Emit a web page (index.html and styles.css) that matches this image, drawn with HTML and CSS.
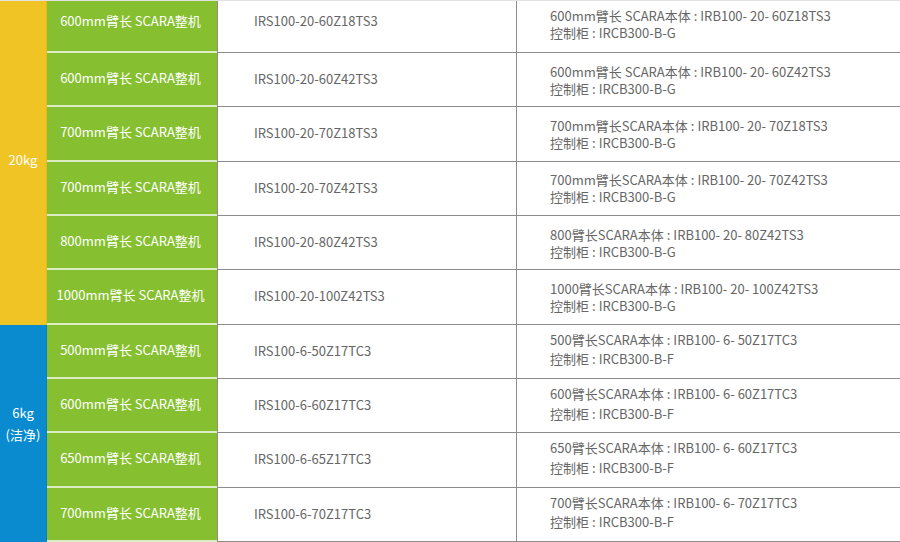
FILE: index.html
```html
<!DOCTYPE html>
<html lang="zh">
<head>
<meta charset="utf-8">
<title>SCARA</title>
<link rel="stylesheet" href="styles.css">
</head>
<body>
<div class="spec">
  <div class="load load-20">20kg</div>
  <div class="load load-6">6kg<br>(洁净)</div>

  <div class="name first">600mm臂长 SCARA整机</div>
  <div class="code first">IRS100-20-60Z18TS3</div>
  <div class="parts first"><span>600mm臂长 SCARA本体<span class="colon">:</span>IRB100- 20- 60Z18TS3</span><span>控制柜<span class="colon">:</span>IRCB300-B-G</span></div>

  <div class="name">600mm臂长 SCARA整机</div>
  <div class="code">IRS100-20-60Z42TS3</div>
  <div class="parts"><span>600mm臂长 SCARA本体<span class="colon">:</span>IRB100- 20- 60Z42TS3</span><span>控制柜<span class="colon">:</span>IRCB300-B-G</span></div>

  <div class="name">700mm臂长 SCARA整机</div>
  <div class="code">IRS100-20-70Z18TS3</div>
  <div class="parts"><span>700mm臂长SCARA本体<span class="colon">:</span>IRB100- 20- 70Z18TS3</span><span>控制柜<span class="colon">:</span>IRCB300-B-G</span></div>

  <div class="name">700mm臂长 SCARA整机</div>
  <div class="code">IRS100-20-70Z42TS3</div>
  <div class="parts"><span>700mm臂长SCARA本体<span class="colon">:</span>IRB100- 20- 70Z42TS3</span><span>控制柜<span class="colon">:</span>IRCB300-B-G</span></div>

  <div class="name">800mm臂长 SCARA整机</div>
  <div class="code">IRS100-20-80Z42TS3</div>
  <div class="parts"><span>800臂长SCARA本体<span class="colon">:</span>IRB100- 20- 80Z42TS3</span><span>控制柜<span class="colon">:</span>IRCB300-B-G</span></div>

  <div class="name">1000mm臂长 SCARA整机</div>
  <div class="code">IRS100-20-100Z42TS3</div>
  <div class="parts"><span>1000臂长SCARA本体<span class="colon">:</span>IRB100- 20- 100Z42TS3</span><span>控制柜<span class="colon">:</span>IRCB300-B-G</span></div>

  <div class="name">500mm臂长 SCARA整机</div>
  <div class="code">IRS100-6-50Z17TC3</div>
  <div class="parts loose"><span>500臂长SCARA本体<span class="colon">:</span>IRB100- 6- 50Z17TC3</span><span>控制柜<span class="colon">:</span>IRCB300-B-F</span></div>

  <div class="name">600mm臂长 SCARA整机</div>
  <div class="code">IRS100-6-60Z17TC3</div>
  <div class="parts loose"><span>600臂长SCARA本体<span class="colon">:</span>IRB100- 6- 60Z17TC3</span><span>控制柜<span class="colon">:</span>IRCB300-B-F</span></div>

  <div class="name">650mm臂长 SCARA整机</div>
  <div class="code">IRS100-6-65Z17TC3</div>
  <div class="parts loose"><span>650臂长SCARA本体<span class="colon">:</span>IRB100- 6- 60Z17TC3</span><span>控制柜<span class="colon">:</span>IRCB300-B-F</span></div>

  <div class="name">700mm臂长 SCARA整机</div>
  <div class="code">IRS100-6-70Z17TC3</div>
  <div class="parts loose"><span>700臂长SCARA本体<span class="colon">:</span>IRB100- 6- 70Z17TC3</span><span>控制柜<span class="colon">:</span>IRCB300-B-F</span></div>
</div>
</body>
</html>
```

FILE: styles.css
```css
* { box-sizing: border-box; }
body {
  margin: 0;
  background: #fff;
  font-family: "Noto Sans CJK SC", "Noto Sans", sans-serif;
  font-size: 13px;
}
.spec {
  width: 900px;
  display: grid;
  grid-template-columns: 47px 170px 300px 1fr;
  grid-template-rows: 52px repeat(9, 54.33px);
  grid-auto-flow: column dense;
  border-top: 1px solid #e2e2e2;
}
.load {
  grid-column: 1;
  display: flex;
  align-items: center;
  justify-content: center;
  text-align: center;
  color: #fff;
  line-height: 22px;
}
.load-20 {
  grid-row: 1 / 7;
  background: #f0c425;
  border-right: 1px solid #e8b818;
  padding-bottom: 6px;
}
.load-6 {
  grid-row: 7 / 11;
  background: #0a8bd0;
  border-right: 1px solid #0a7fc0;
  padding-bottom: 18px;
}
.name {
  grid-column: 2;
  background: #86bf2f;
  color: #fff;
  display: flex;
  align-items: center;
  justify-content: center;
  border-bottom: 2px solid #dcedc6;
  padding: 0 3px 3px 0;
}
.code {
  grid-column: 3;
  display: flex;
  align-items: center;
  padding-left: 36px;
  padding-bottom: 2px;
  color: #666;
  border-left: 1px solid #8c8c8c;
  border-right: 1px solid #8c8c8c;
  border-bottom: 1px solid #8c8c8c;
}
.parts {
  grid-column: 4;
  display: flex;
  flex-direction: column;
  justify-content: center;
  padding-left: 33px;
  color: #666;
  line-height: 17px;
  border-bottom: 1px solid #8c8c8c;
}
.parts.loose {
  line-height: 19.5px;
  padding-bottom: 4px;
}
.colon {
  margin: 0 3px;
}
.name.first,
.code.first { padding-bottom: 12px; }
.parts.first { padding-bottom: 6px; }
```
